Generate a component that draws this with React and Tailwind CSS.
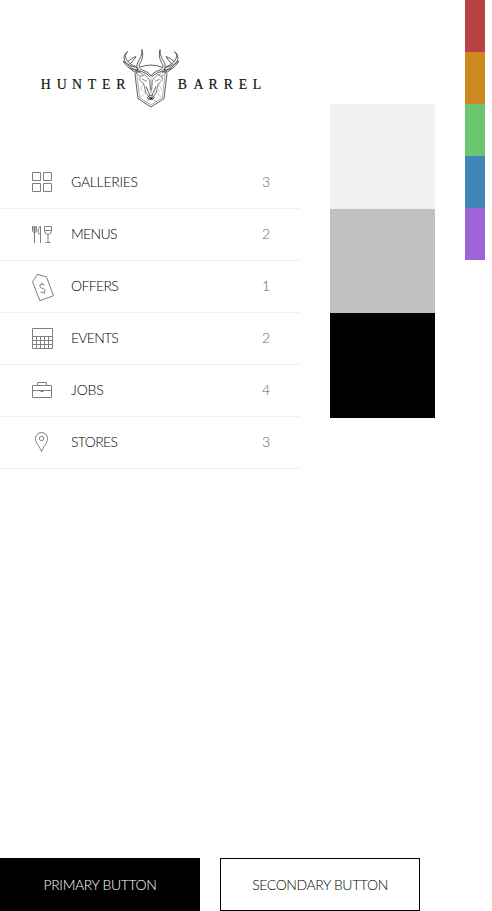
import React from "react";

function Logo() {
  return (
    <svg width="300" height="156" viewBox="0 0 300 156" fill="none" aria-label="Hunter Barrel">
      <g
        fill="#111"
        stroke="#111"
        strokeWidth="0.2"
        fontFamily="'Liberation Serif', serif"
        fontSize="15"
        transform="scale(0.92 1)"
      >
        <text y="89" x="44.4 61.7 78.2 95.5 111.0 126.5">HUNTER</text>
        <text y="89" x="193.2 210.3 226.6 243.2 259.6 274.6">BARREL</text>
      </g>
      <g transform="translate(110 40) scale(0.33333)" stroke="#333" strokeWidth="2.4" strokeLinejoin="round" strokeLinecap="round">
        <path d="M91 81Q123 69 155 81M75 101L84 176L123 201L162 176L171 101" />
        <path d="M81 106L89 173L123 195L157 173L165 106" strokeWidth="1.2" />
        {[false, true].map((mirrored) => (
          <g key={String(mirrored)} transform={mirrored ? "translate(246 0) scale(-1 1)" : undefined}>
            <path d="M52 36C44 41 44 52 52 62C58 71 66 77 77 79L84 90C72 90 58 82 49 70C39 58 40 42 52 36Z" />
            <path d="M40 64C48 78 58 88 74 90L86 94M41 64C52 72 62 80 76 82M54 64C62 59 66 53 78 50C72 57 68 65 62 71M62 86C68 96 78 99 90 95" />
            <path d="M96 30C97 45 90 55 84 66C77 79 81 89 92 94C106 99 115 103 120 111M96 30C101 47 96 60 90 70C84 81 88 87 99 91C110 95 118 99 122 107" />
            <path d="M80 101C75 94 77 90 84 94L101 106L92 109L80 101" strokeWidth="1.6" />
            <path d="M91 109C85 119 93 126 101 130L107 157L116 170M102 103C110 112 116 113 119 124L121 150M98 118L110 124" strokeWidth="1.8" />
            <path d="M123 117V158L116 165M108 158L89 173M101 130L91 148L107 157M116 180L105 186" strokeWidth="0.7" />
            <path d="M108 140L116 158L120 166" />
          </g>
        ))}
        <path d="M113 172L119 167H127L133 172L129 178H117Z" />
        <path d="M118 173L121 177H125L128 173Z" fill="#111" />
      </g>
    </svg>
  );
}

const icons = {
  galleries: <path d="M.5.5h8v8h-8zM11.5.5h8v8h-8zM.5 11.5h8v8h-8zM11.5 11.5h8v8h-8z" />,
  menus: (
    <>
      <path d="M.5 2v4.5q0 2 2 2t2-2V2M2.5 2v17M8.5 19V2Q6 4 6 8q0 2 2.5 2" />
      <path d="M1.5 2v5M3.5 2v5" strokeWidth=".6" />
      <path d="M12.5 2.5h7v4q0 4-3.5 4t-3.5-4zM12.5 6.5h7M16 10.5v8M13.5 18.5h5" />
    </>
  ),
  offers: (
    <>
      <path d="M.5 6.5L5.5 -.8L14.5 1.8L21.5 20.6L7.8 25.6Z" transform="translate(0 -.9)" />
      <path d="M12.7 9.2Q10.2 7.2 8.2 8.7Q6.7 11 9.7 12.2Q13.9 12.8 12.9 15.5Q11 17.5 8.5 16M9.5 6.6l.7 1.7M11.9 15.9l.8 2" />
    </>
  ),
  events: <path d="M.5.5h20v20H.5zM.5 8.5h20M.5 12.5h20M.5 16.5h20M4.5 8.5v12M8.5 8.5v12M12.5 8.5v12M16.5 8.5v12" />,
  jobs: <path d="M.5 5.5h19v12H.5zM5.5 5.5v-3h9v3M.5 10.5h19M8.5 11.5h3" />,
  stores: (
    <>
      <path d="M9.5 19.5C8 15 3.5 11 3.5 6.5a6 6 0 0 1 12 0C15.5 11 11 15 9.5 19.5Z" />
      <circle cx="9.5" cy="6.5" r="2.2" />
    </>
  ),
};

const items = [
  { id: "galleries", label: "GALLERIES", count: 3, tracking: "tracking-[-0.3px]" },
  { id: "menus", label: "MENUS", count: 2, tracking: "tracking-[-0.65px]" },
  { id: "offers", label: "OFFERS", count: 1, tracking: "tracking-[-0.65px]" },
  { id: "events", label: "EVENTS", count: 2, tracking: "tracking-[-0.75px]" },
  { id: "jobs", label: "JOBS", count: 4, tracking: "tracking-[-0.15px]" },
  { id: "stores", label: "STORES", count: 3, tracking: "tracking-[-0.65px]" },
];

export default function App() {
  return (
    <div className="flex h-[911px] w-[492px] flex-col justify-between overflow-hidden bg-white font-['Lato',sans-serif] text-[14px] font-light">
      <div className="flex items-start">
        <aside className="w-[300px]">
          <Logo />
          <nav>
            {items.map((item) => (
              <a key={item.id} className="flex h-[52px] items-center pr-[30px] pl-8 shadow-[0_1px_0_#f1f1f1]">
                <svg className="h-5 w-5 shrink-0 overflow-visible" viewBox="0 0 20 20" fill="none" stroke="#808080" strokeWidth="1">
                  {icons[item.id]}
                </svg>
                <span className={"ml-[19px] flex-1 pb-0.5 text-black " + item.tracking}>{item.label}</span>
                <span className="w-2 pb-0.5 text-center text-[#666]">{item.count}</span>
              </a>
            ))}
          </nav>
        </aside>
        <div className="mt-[104px] ml-[30px] w-[105px]">
          <div className="h-[105px] bg-[#f1f1f1]" />
          <div className="h-[104px] bg-[#c1c1c1]" />
          <div className="h-[105px] bg-black" />
        </div>
        <div className="ml-[30px] w-5">
          <div className="h-[52px] bg-[#b84242]" />
          <div className="h-[52px] bg-[#cd8920]" />
          <div className="h-[52px] bg-[#6cc570]" />
          <div className="h-[52px] bg-[#4285b8]" />
          <div className="h-[52px] bg-[#a062d8]" />
        </div>
      </div>
      <div className="flex gap-5">
        <button className="h-[53px] w-[200px] border border-black bg-black tracking-[-0.38px] text-white">PRIMARY BUTTON</button>
        <button className="h-[53px] w-[200px] border border-black bg-white tracking-[-0.4px] text-black">SECONDARY BUTTON</button>
      </div>
    </div>
  );
}
